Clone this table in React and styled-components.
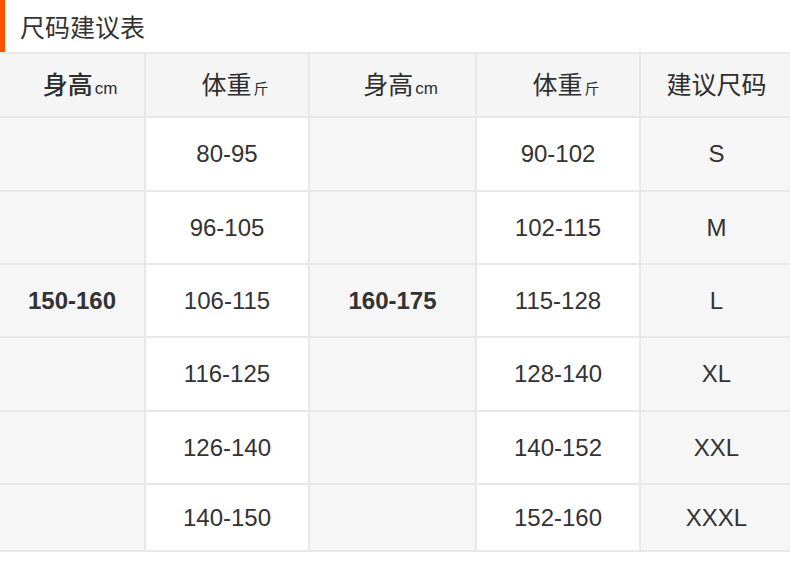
import React from "react";
import styled, { createGlobalStyle } from "styled-components";

const GlobalStyle = createGlobalStyle`
  body {
    margin: 0;
    background: #ffffff;
    font-family: "Liberation Sans", "Noto Sans CJK SC", sans-serif;
    color: #333333;
  }
`;

const Page = styled.div`
  width: 790px;
  overflow: hidden;
`;

const TitleBar = styled.div`
  height: 52px;
  display: flex;
  align-items: center;
  border-left: 5px solid #ff5000;
  padding-left: 15px;
  font-size: 25px;
  color: #333;
  font-family: "Noto Sans CJK SC", sans-serif;
`;

const Table = styled.div`
  display: grid;
  grid-template-columns: 144px 162px 165px 162px 151px;
  grid-template-rows: 62px 72px 71px 71px 72px 71px 65px;
  gap: 2px;
  background: #e8e8e8;
  border-top: 2px solid #e8e8e8;
  border-bottom: 2px solid #e8e8e8;
  width: 792px;
`;

const Cell = styled.div`
  display: flex;
  align-items: center;
  justify-content: center;
  background: ${(p) => (p.$gray ? "#f6f6f6" : "#ffffff")};
  font-size: 24px;
  font-weight: ${(p) => (p.$bold ? 700 : 400)};
  color: #333;
`;

const HeadCell = styled.div`
  display: flex;
  align-items: center;
  justify-content: center;
  padding-left: ${(p) => (p.$unit ? "16px" : "0")};
  padding-bottom: 4px;
  box-sizing: border-box;
  background: #f5f5f5;
`;

const HeadLabel = styled.span`
  font-family: "Noto Sans CJK SC", sans-serif;
  font-size: 25px;
  font-weight: ${(p) => (p.$strong ? 500 : 400)};
  color: #2e2e2e;
  white-space: nowrap;
`;

const Unit = styled.span`
  font-family: ${(p) => (p.$latin ? '"Liberation Sans", sans-serif' : '"Noto Sans CJK SC", sans-serif')};
  font-size: ${(p) => (p.$latin ? "17px" : "15px")};
  font-weight: 400;
  margin-left: 2px;
`;

const rows = [
  ["", "80-95", "", "90-102", "S"],
  ["", "96-105", "", "102-115", "M"],
  ["150-160", "106-115", "160-175", "115-128", "L"],
  ["", "116-125", "", "128-140", "XL"],
  ["", "126-140", "", "140-152", "XXL"],
  ["", "140-150", "", "152-160", "XXXL"],
];

export default function App() {
  return (
    <Page>
      <GlobalStyle />
      <TitleBar>尺码建议表</TitleBar>
      <Table>
        <HeadCell $unit>
          <HeadLabel $strong>
            身高<Unit $latin>cm</Unit>
          </HeadLabel>
        </HeadCell>
        <HeadCell $unit>
          <HeadLabel>
            体重<Unit>斤</Unit>
          </HeadLabel>
        </HeadCell>
        <HeadCell $unit>
          <HeadLabel>
            身高<Unit $latin>cm</Unit>
          </HeadLabel>
        </HeadCell>
        <HeadCell $unit>
          <HeadLabel>
            体重<Unit>斤</Unit>
          </HeadLabel>
        </HeadCell>
        <HeadCell>
          <HeadLabel>建议尺码</HeadLabel>
        </HeadCell>
        {rows.map((row, r) =>
          row.map((text, c) => (
            <Cell key={`${r}-${c}`} $gray={c % 2 === 0} $bold={c === 0 || c === 2}>
              {text}
            </Cell>
          ))
        )}
      </Table>
    </Page>
  );
}
